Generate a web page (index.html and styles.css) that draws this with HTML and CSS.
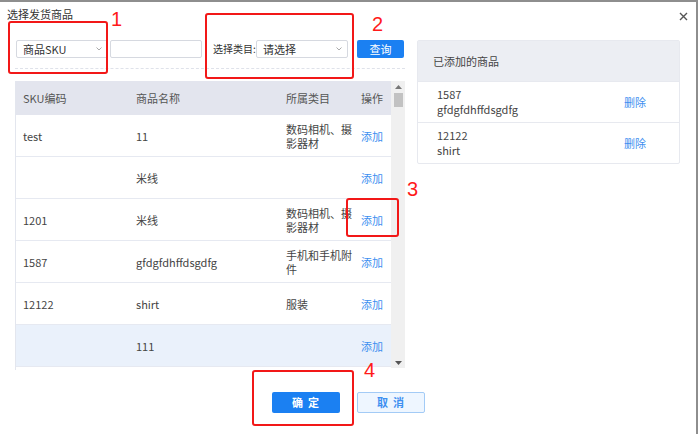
FILE: index.html
```html
<!DOCTYPE html>
<html lang="zh-CN">
    <head>
        <meta charset="utf-8">
        <link rel="stylesheet" href="styles.css">
    </head>
    <body>
        <div class="dialog">
            <div class="dialog-title">选择发货商品</div>
            <span class="close">
                <svg width="9" height="9" viewBox="0 0 9 9"><path d="M1 1L8 8M8 1L1 8" stroke="#555" stroke-width="1.4"/></svg>
            </span>

            <div class="dialog-body">
                <div class="left">
                    <div class="toolbar">
                        <div class="select sku-select">
                            <span>商品SKU</span>
                            <svg width="6" height="4" viewBox="0 0 6 4"><path d="M0.5 0.5L3 3L5.5 0.5" fill="none" stroke="#aaa" stroke-width="1"/></svg>
                        </div>
                        <div class="input"></div>
                        <span class="label">选择类目:</span>
                        <div class="select">
                            <span>请选择</span>
                            <svg width="6" height="4" viewBox="0 0 6 4"><path d="M0.5 0.5L3 3L5.5 0.5" fill="none" stroke="#aaa" stroke-width="1"/></svg>
                        </div>
                        <span class="btn-query">查询</span>
                    </div>

                    <div class="grid">
                        <div class="grid-main">
                            <table>
                                <colgroup>
                                    <col style="width:113px">
                                    <col style="width:150px">
                                    <col style="width:75px">
                                    <col>
                                </colgroup>
                                <tr>
                                    <th>SKU编码</th>
                                    <th>商品名称</th>
                                    <th>所属类目</th>
                                    <th>操作</th>
                                </tr>
                                <tr>
                                    <td>test</td>
                                    <td>11</td>
                                    <td>数码相机、摄影器材</td>
                                    <td><a href="#">添加</a></td>
                                </tr>
                                <tr>
                                    <td></td>
                                    <td>米线</td>
                                    <td></td>
                                    <td><a href="#">添加</a></td>
                                </tr>
                                <tr>
                                    <td>1201</td>
                                    <td>米线</td>
                                    <td>数码相机、摄影器材</td>
                                    <td><a href="#">添加</a></td>
                                </tr>
                                <tr>
                                    <td>1587</td>
                                    <td>gfdgfdhffdsgdfg</td>
                                    <td>手机和手机附件</td>
                                    <td><a href="#">添加</a></td>
                                </tr>
                                <tr>
                                    <td>12122</td>
                                    <td>shirt</td>
                                    <td>服装</td>
                                    <td><a href="#">添加</a></td>
                                </tr>
                                <tr class="hover">
                                    <td></td>
                                    <td>111</td>
                                    <td></td>
                                    <td><a href="#">添加</a></td>
                                </tr>
                            </table>
                        </div>
                        <div class="scrollbar">
                            <svg width="7" height="4" viewBox="0 0 7 4"><path d="M0 4L3.5 0L7 4Z" fill="#777"/></svg>
                            <div class="thumb"></div>
                            <div class="track"></div>
                            <svg width="7" height="4" viewBox="0 0 7 4"><path d="M0 0L3.5 4L7 0Z" fill="#555"/></svg>
                        </div>
                    </div>
                </div>

                <div class="added">
                    <div class="added-head">已添加的商品</div>
                    <div class="added-item">
                        <div class="info">1587<br>gfdgfdhffdsgdfg</div>
                        <a href="#">删除</a>
                    </div>
                    <div class="added-item">
                        <div class="info">12122<br>shirt</div>
                        <a href="#">删除</a>
                    </div>
                </div>
            </div>

            <div class="dialog-footer">
                <span class="btn btn-primary">确定</span>
                <span class="btn btn-default">取消</span>
            </div>

            <!-- 标注 -->
            <div class="mark mark1"></div>
            <div class="mark mark2"></div>
            <div class="mark mark3"></div>
            <div class="mark mark4"></div>
            <span class="num num1">1</span>
            <span class="num num2">2</span>
            <span class="num num3">3</span>
            <span class="num num4">4</span>
        </div>
    </body>
</html>
```

FILE: styles.css
```css
*{
    margin:0;
    padding:0;
    box-sizing: border-box;
}
body{
    background-color: #8e8e8e;
    font-family: "Noto Sans CJK SC", "Liberation Sans", sans-serif;
    font-size: 11px;
    color: #444;
}
a{
    color: #3d8ff0;
    text-decoration: none;
}
.dialog{
    position: relative;
    width: 696px;
    height: 432px;
    margin-top: 2px;
    background-color: #fff;
}
.dialog-title{
    padding: 5px 0 0 7px;
    line-height: 14px;
    color: #333;
}
.close{
    position: absolute;
    top: 10px;
    right: 8px;
    line-height: 0;
}

.dialog-body{
    display: flex;
    align-items: flex-start;
    padding-left: 15px;
    margin-top: 19px;
}
.left{
    width: 390px;
}
.toolbar{
    display: flex;
    align-items: center;
    height: 29px;
    padding-left: 1px;
    padding-bottom: 11px;
    border-bottom: 1px dashed #dfe2ea;
}
.toolbar > *{
    flex: none;
}
.select, .input{
    width: 92px;
    height: 18px;
    border: 1px solid #d6d9e0;
    border-radius: 2px;
}
.select{
    display: flex;
    align-items: center;
    justify-content: space-between;
    padding: 0 5px 0 6px;
    color: #333;
}
.input{
    margin-left: 2px;
}
.label{
    width: 43px;
    margin-left: 11px;
    white-space: nowrap;
    overflow: hidden;
    font-size: 10px;
    color: #333;
}
.btn-query{
    width: 47px;
    height: 18px;
    margin-left: 9px;
    line-height: 18px;
    text-align: center;
    color: #fff;
    background-color: #1b80f2;
    border-radius: 2px;
}

.grid{
    display: flex;
    margin-top: 12px;
}
.grid-main{
    width: 376px;
    height: 289px;
    overflow: hidden;
    border-left: 1px solid #e3e6ee;
}
.grid table{
    width: 375px;
    table-layout: fixed;
    border-collapse: separate;
    border-spacing: 0;
}
.grid th{
    height: 34px;
    padding: 0 7px;
    text-align: left;
    font-weight: normal;
    color: #555;
    background-color: #e3e5ee;
}
.grid td{
    height: 42px;
    padding: 0 2px 0 7px;
    line-height: 14px;
    border-bottom: 1px solid #e6e9f1;
}
.grid tr.hover td{
    background-color: #eaf1fb;
}
.scrollbar{
    display: flex;
    flex-direction: column;
    align-items: center;
    width: 14px;
    height: 287px;
    padding: 4px 0 3px;
    background-color: #f0f0f0;
}
.scrollbar .thumb{
    width: 9px;
    height: 14px;
    margin-top: 4px;
    background-color: #c2c2c2;
}
.scrollbar .track{
    flex: 1;
}

.added{
    width: 263px;
    margin-left: 12px;
    border: 1px solid #e7e9ef;
    border-radius: 2px;
}
.added-head{
    height: 40px;
    padding-left: 15px;
    line-height: 40px;
    color: #444;
    background-color: #eceef3;
}
.added-item{
    display: flex;
    align-items: center;
    justify-content: space-between;
    height: 41px;
    padding: 0 33px 0 19px;
    line-height: 15px;
    border-top: 1px solid #e7e9ef;
}

.dialog-footer{
    display: flex;
    justify-content: center;
    gap: 17px;
    margin-top: 22px;
}
.btn{
    width: 68px;
    height: 21px;
    line-height: 19px;
    text-align: center;
    font-weight: bold;
    letter-spacing: 5px;
    text-indent: 5px;
    border-radius: 2px;
    border: 1px solid transparent;
}
.btn-primary{
    color: #fff;
    background-color: #1b80f2;
}
.btn-default{
    color: #3d8ff0;
    background-color: #eef6ff;
    border-color: #a3cbf6;
}

.mark{
    position: absolute;
    border: 2px solid #f21818;
    border-radius: 3px;
}
.mark1{ left: 8px; top: 19px; width: 100px; height: 53px; }
.mark2{ left: 205px; top: 11px; width: 149px; height: 66px; }
.mark3{ left: 346px; top: 196px; width: 53px; height: 39px; }
.mark4{ left: 252px; top: 368px; width: 102px; height: 56px; }
.num{
    position: absolute;
    font-family: "Liberation Sans", sans-serif;
    font-size: 20px;
    line-height: 20px;
    color: #ff1a1a;
}
.num1{ left: 111px; top: 7px; }
.num2{ left: 372px; top: 12px; }
.num3{ left: 407px; top: 177px; }
.num4{ left: 364px; top: 358px; }
```
